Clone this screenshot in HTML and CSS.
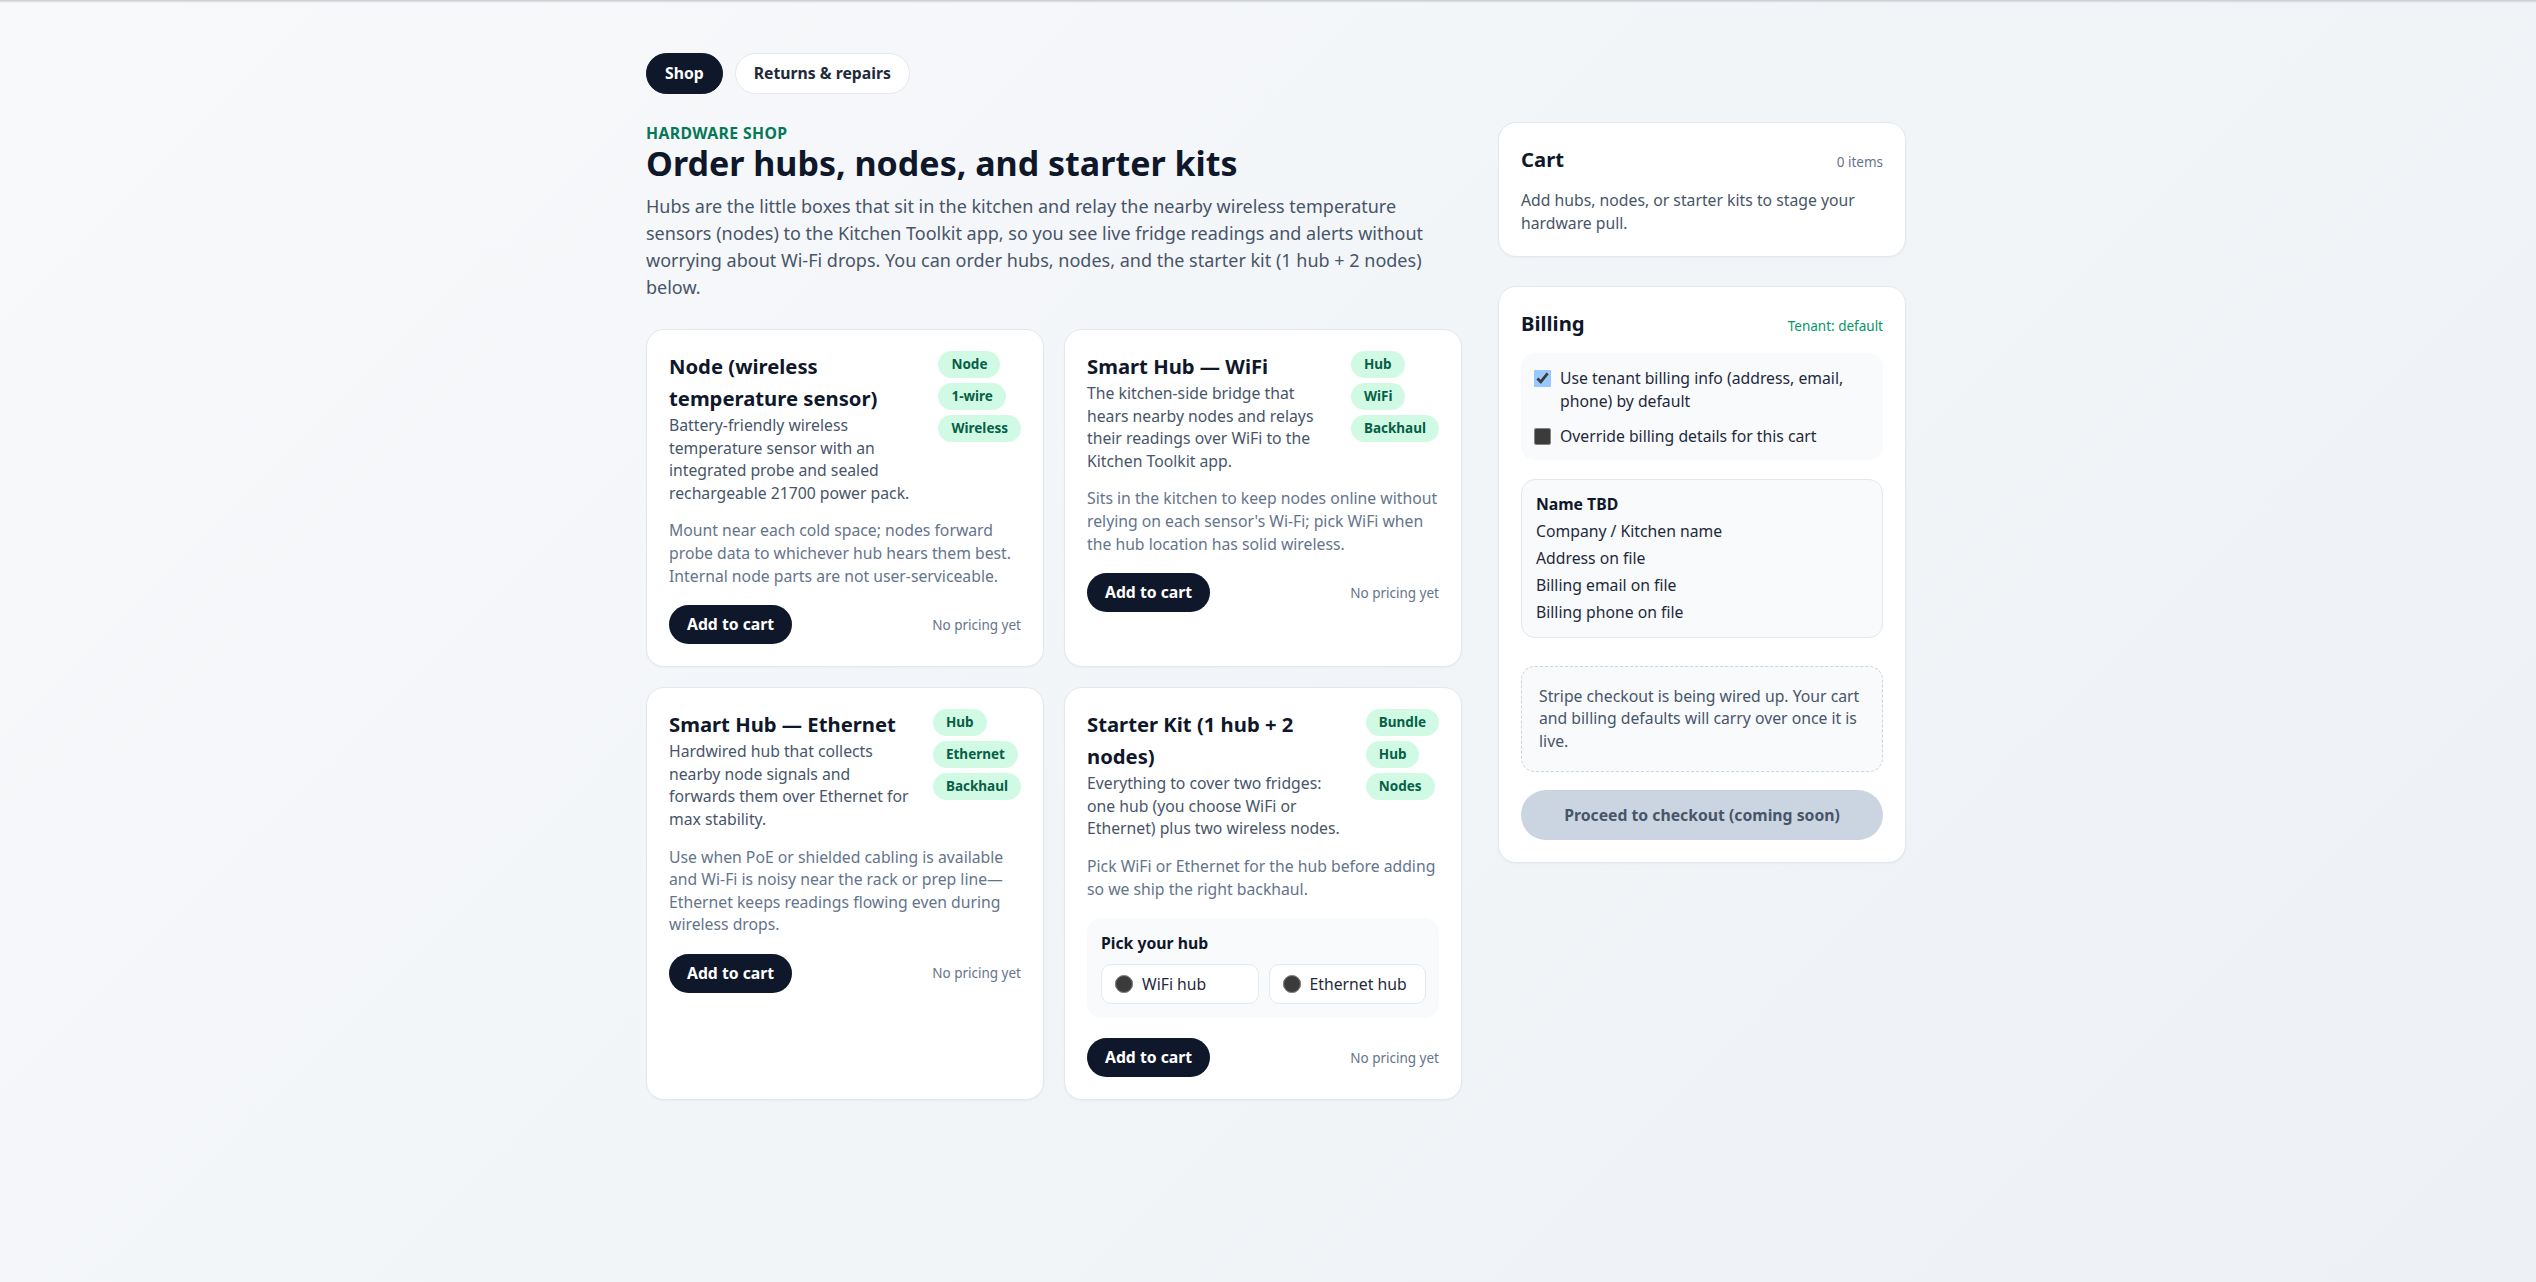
FILE: index.html
```html
<!DOCTYPE html>
<html lang="en">
    <head>
        <meta charset="UTF-8">
        <title>Hardware shop</title>
        <link rel="stylesheet" href="styles.css">
    </head>
    <body>

        <div class="page">

            <!-- top tabs -->
            <nav class="tabs">
                <a class="tab tab-on" href="#">Shop</a>
                <a class="tab" href="#">Returns &amp; repairs</a>
            </nav>

            <div class="layout">

                <main class="shop">
                    <p class="eyebrow">Hardware shop</p>
                    <h1>Order hubs, nodes, and starter kits</h1>
                    <p class="intro">Hubs are the little boxes that sit in the kitchen and relay the nearby wireless temperature sensors (nodes) to the Kitchen Toolkit app, so you see live fridge readings and alerts without worrying about Wi-Fi drops. You can order hubs, nodes, and the starter kit (1 hub + 2 nodes) below.</p>

                    <div class="products">

                        <!-- node -->
                        <div class="card">
                            <div class="card-head">
                                <div class="card-copy">
                                    <h2>Node (wireless temperature sensor)</h2>
                                    <p class="desc">Battery-friendly wireless temperature sensor with an integrated probe and sealed rechargeable 21700 power pack.</p>
                                </div>
                                <div class="tags">
                                    <span class="tag">Node</span>
                                    <span class="tag">1-wire</span>
                                    <span class="tag">Wireless</span>
                                </div>
                            </div>
                            <p class="note">Mount near each cold space; nodes forward probe data to whichever hub hears them best. Internal node parts are not user-serviceable.</p>
                            <div class="card-foot">
                                <button class="btn">Add to cart</button>
                                <span class="price">No pricing yet</span>
                            </div>
                        </div>

                        <!-- wifi hub -->
                        <div class="card">
                            <div class="card-head">
                                <div class="card-copy">
                                    <h2>Smart Hub — WiFi</h2>
                                    <p class="desc">The kitchen-side bridge that hears nearby nodes and relays their readings over WiFi to the Kitchen Toolkit app.</p>
                                </div>
                                <div class="tags">
                                    <span class="tag">Hub</span>
                                    <span class="tag">WiFi</span>
                                    <span class="tag">Backhaul</span>
                                </div>
                            </div>
                            <p class="note">Sits in the kitchen to keep nodes online without relying on each sensor's Wi-Fi; pick WiFi when the hub location has solid wireless.</p>
                            <div class="card-foot">
                                <button class="btn">Add to cart</button>
                                <span class="price">No pricing yet</span>
                            </div>
                        </div>

                        <!-- ethernet hub -->
                        <div class="card">
                            <div class="card-head">
                                <div class="card-copy">
                                    <h2>Smart Hub — Ethernet</h2>
                                    <p class="desc">Hardwired hub that collects nearby node signals and forwards them over Ethernet for max stability.</p>
                                </div>
                                <div class="tags">
                                    <span class="tag">Hub</span>
                                    <span class="tag">Ethernet</span>
                                    <span class="tag">Backhaul</span>
                                </div>
                            </div>
                            <p class="note">Use when PoE or shielded cabling is available and Wi-Fi is noisy near the rack or prep line—Ethernet keeps readings flowing even during wireless drops.</p>
                            <div class="card-foot">
                                <button class="btn">Add to cart</button>
                                <span class="price">No pricing yet</span>
                            </div>
                        </div>

                        <!-- starter kit -->
                        <div class="card">
                            <div class="card-head">
                                <div class="card-copy">
                                    <h2>Starter Kit (1 hub + 2 nodes)</h2>
                                    <p class="desc">Everything to cover two fridges: one hub (you choose WiFi or Ethernet) plus two wireless nodes.</p>
                                </div>
                                <div class="tags">
                                    <span class="tag">Bundle</span>
                                    <span class="tag">Hub</span>
                                    <span class="tag">Nodes</span>
                                </div>
                            </div>
                            <p class="note">Pick WiFi or Ethernet for the hub before adding so we ship the right backhaul.</p>
                            <div class="picker">
                                <p class="picker-label">Pick your hub</p>
                                <div class="options">
                                    <label class="option"><input type="radio" name="hub" value="wifi"> WiFi hub</label>
                                    <label class="option"><input type="radio" name="hub" value="ethernet"> Ethernet hub</label>
                                </div>
                            </div>
                            <div class="card-foot">
                                <button class="btn">Add to cart</button>
                                <span class="price">No pricing yet</span>
                            </div>
                        </div>

                    </div>
                </main>

                <aside class="side">

                    <div class="panel">
                        <div class="panel-head">
                            <h2>Cart</h2>
                            <span class="count">0 items</span>
                        </div>
                        <p class="panel-text">Add hubs, nodes, or starter kits to stage your hardware pull.</p>
                    </div>

                    <div class="panel">
                        <div class="panel-head">
                            <h2>Billing</h2>
                            <span class="tenant">Tenant: default</span>
                        </div>

                        <div class="billing-opts">
                            <label class="check"><input type="checkbox" checked> Use tenant billing info (address, email, phone) by default</label>
                            <label class="check"><input type="checkbox"> Override billing details for this cart</label>
                        </div>

                        <div class="contact">
                            <strong>Name TBD</strong>
                            <span>Company / Kitchen name</span>
                            <span>Address on file</span>
                            <span>Billing email on file</span>
                            <span>Billing phone on file</span>
                        </div>

                        <p class="notice">Stripe checkout is being wired up. Your cart and billing defaults will carry over once it is live.</p>

                        <button class="checkout" disabled>Proceed to checkout (coming soon)</button>
                    </div>

                </aside>

            </div>
        </div>

    </body>
</html>
```

FILE: styles.css
```css
body {
    margin: 0;
    min-height: 100vh;
    font-family: "Noto Sans", "DejaVu Sans", sans-serif;
    color: #0f172a;
    background: linear-gradient(135deg, #f8f9fb 0%, #f2f5f8 50%, #edf0f4 100%);
}

/* thin shade along the top edge */
body::before {
    content: "";
    position: fixed;
    top: 0;
    left: 0;
    right: 0;
    height: 3px;
    background: linear-gradient(#c4c8ce, rgba(196, 200, 206, 0));
}

.page {
    width: 1260px;
    margin: 0 auto;
    padding: 53px 0 64px 16px;
}

/* tabs */
.tabs {
    display: flex;
    gap: 12px;
    margin-bottom: 28px;
}

.tab {
    font-size: 15.75px;
    font-weight: 700;
    line-height: 21px;
    padding: 9px 18px;
    border-radius: 999px;
    border: 1px solid #e2e8f0;
    background-color: white;
    color: #1e293b;
    text-decoration: none;
}

.tab-on {
    background-color: #0f172a;
    border-color: #0f172a;
    color: white;
}

.layout {
    display: grid;
    grid-template-columns: 2fr 1fr;
    gap: 36px;
    align-items: start;
}

/* heading */
.eyebrow {
    margin: 0;
    font-size: 15.75px;
    font-weight: 700;
    line-height: 22px;
    letter-spacing: 0.025em;
    text-transform: uppercase;
    color: #047857;
}

h1 {
    margin: 0;
    font-size: 34px;
    line-height: 38px;
    font-weight: 700;
}

.intro {
    margin: 11px 0 0;
    font-size: 18px;
    line-height: 27px;
    color: #475569;
}

/* product cards */
.products {
    display: grid;
    grid-template-columns: 1fr 1fr;
    gap: 20px;
    margin-top: 28px;
}

.card,
.panel {
    background-color: white;
    border: 1px solid #e2e8f0;
    border-radius: 18px;
    padding: 20px 22px 22px;
    box-shadow: 0 1px 2px rgba(15, 23, 42, 0.04);
}

.card-head {
    display: flex;
    gap: 16px;
    align-items: flex-start;
}

.card-copy {
    flex: 1;
}

.card h2,
.panel h2 {
    margin: 0;
    font-size: 20.25px;
    line-height: 32px;
    font-weight: 700;
}

.desc,
.note,
.panel-text,
.notice {
    margin: 0;
    font-size: 15.75px;
    line-height: 22.6px;
    color: #475569;
}

.note {
    margin-top: 15px;
    color: #64748b;
}

.tags {
    flex-shrink: 0;
    display: flex;
    flex-direction: column;
    align-items: flex-start;
    gap: 5px;
    padding-top: 1px;
}

.tag {
    font-size: 13.5px;
    font-weight: 700;
    line-height: 19px;
    padding: 4px 13px;
    border-radius: 999px;
    background-color: #d1fae5;
    color: #065f46;
}

.card-foot {
    display: flex;
    justify-content: space-between;
    align-items: center;
    margin-top: 18px;
}

.picker + .card-foot {
    margin-top: 20px;
}

.btn {
    font-family: inherit;
    font-size: 15.75px;
    font-weight: 700;
    line-height: 21px;
    padding: 9px 18px;
    border: 0;
    border-radius: 999px;
    background-color: #0f172a;
    color: white;
    cursor: pointer;
}

.price,
.count {
    font-size: 13.5px;
    color: #64748b;
}

/* hub choice on the kit */
.picker {
    margin-top: 18px;
    background-color: #f8fafc;
    border-radius: 14px;
    padding: 14px 13px 14px 14px;
}

.picker-label {
    margin: 0 0 10px;
    font-size: 15.75px;
    font-weight: 700;
    line-height: 22px;
}

.options {
    display: grid;
    grid-template-columns: 1fr 1fr;
    gap: 10px;
}

.option {
    display: flex;
    align-items: center;
    gap: 9px;
    height: 40px;
    box-sizing: border-box;
    padding: 0 13px;
    border: 1px solid #e2e8f0;
    border-radius: 10px;
    background-color: white;
    font-size: 15.75px;
    color: #1e293b;
}

.option input {
    color-scheme: dark;
    width: 18px;
    height: 18px;
    margin: 0;
}

/* sidebar */
.side {
    display: flex;
    flex-direction: column;
    gap: 29px;
}

.panel-head {
    display: flex;
    justify-content: space-between;
    align-items: baseline;
}

.panel-text {
    margin-top: 14px;
}

.tenant {
    font-size: 13.5px;
    color: #059669;
}

.billing-opts {
    margin-top: 14px;
    background-color: #f8fafc;
    border-radius: 14px;
    padding: 14px 13px 13px;
    display: flex;
    flex-direction: column;
    gap: 13px;
}

.check {
    display: flex;
    align-items: flex-start;
    gap: 9px;
    font-size: 15.75px;
    line-height: 22.4px;
    color: #1e293b;
}

.check input {
    color-scheme: dark;
    flex-shrink: 0;
    width: 17px;
    height: 17px;
    margin: 3px 0 0;
}

.contact {
    margin-top: 19px;
    border: 1px solid #e2e8f0;
    border-radius: 14px;
    background-color: #f8fafc;
    padding: 13px 14px;
    display: flex;
    flex-direction: column;
    gap: 4.6px;
    font-size: 15.75px;
    line-height: 22.4px;
    color: #1e293b;
}

.contact strong {
    color: #0f172a;
}

.notice {
    margin-top: 28px;
    border: 1px dashed #cbd5e1;
    border-radius: 14px;
    background-color: #f8fafc;
    padding: 18px 17px;
}

.checkout {
    display: block;
    width: 100%;
    height: 50px;
    margin-top: 18px;
    border: 0;
    border-radius: 999px;
    background-color: #cbd5e1;
    color: #475569;
    font-family: inherit;
    font-size: 15.75px;
    font-weight: 700;
}
```
